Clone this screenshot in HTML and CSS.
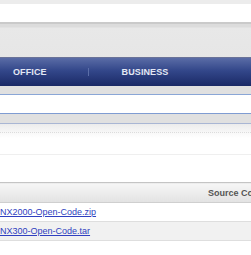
FILE: index.html
```html
<!DOCTYPE html>
<html lang="en">
<head>
  <meta charset="UTF-8">
  <title>Open Source</title>
  <link rel="stylesheet" href="styles.css">
</head>
<body>

  <div class="top-strip"></div>
  <div class="brand"></div>
  <div class="subnav"></div>

  <nav class="mainnav">
    <a href="#" class="office">OFFICE</a>
    <span class="sep"></span>
    <a href="#">BUSINESS</a>
  </nav>

  <div class="band"></div>
  <div class="search"></div>
  <div class="band band-low"></div>
  <div class="crumb"></div>
  <div class="rule"></div>

  <table class="downloads">
    <tr>
      <th class="file-col"></th>
      <th>Source Code</th>
    </tr>
    <tr>
      <td><a href="#">NX2000-Open-Code.zip</a></td>
      <td></td>
    </tr>
    <tr class="alt">
      <td><a href="#">NX300-Open-Code.tar</a></td>
      <td></td>
    </tr>
  </table>

</body>
</html>
```

FILE: styles.css
```css
body {
  margin: 0;
  width: 251px;
  overflow: hidden;
  background: #fff;
  font-family: 'Liberation Sans', Arial, sans-serif;
  font-size: 9px;
}

.top-strip {
  height: 4px;
  background: #ececec;
}

.brand {
  height: 18px;
  background: #fff;
}

.subnav {
  height: 33px;
  border-top: 2px solid #cacaca;
  border-bottom: 1px solid #6a7398;
  background: linear-gradient(#dcdcdc 0, #dcdcdc 3px, #e8e8e8 4px, #e6e6e6 100%);
}

.mainnav {
  height: 28px;
  display: flex;
  align-items: center;
  background: linear-gradient(#5a6ca6, #33478a 45%, #1a2966);
}

.mainnav a {
  color: #e4e8f4;
  text-decoration: none;
  font-weight: bold;
  font-size: 9px;
  letter-spacing: 0.1px;
}

.mainnav .office {
  margin-left: 13px;
}

.sep {
  width: 1px;
  height: 8px;
  background: #5b6ea8;
  margin: 0 33px 0 41px;
}

.band {
  height: 8px;
  background: #e0e0e0;
  border-bottom: 1px solid #8aa6d6;
}

.band-low {
  height: 9px;
  border-top: 1px solid #7f9cd2;
  border-bottom: 1px solid #a9b6d4;
}

.search {
  height: 18px;
  background: #fff;
}

.crumb {
  height: 30px;
  background: linear-gradient(#ececec, #fff 14px);
}

.crumb::after {
  content: "";
  display: block;
  height: 0;
  border-top: 1px dotted #dcdcdc;
  position: relative;
  top: 8px;
}

.rule {
  height: 27px;
  border-top: 1px solid #efefef;
}

.downloads {
  width: 420px;
  border-collapse: collapse;
}

.downloads th {
  height: 19px;
  padding: 0;
  text-align: left;
  color: #555;
  font-size: 9px;
  background: linear-gradient(#f6f6f6, #e2e2e2);
  border-top: 1px solid #c4c4c4;
  border-bottom: 1px solid #cfcfcf;
}

.downloads .file-col {
  width: 208px;
}

.downloads td {
  height: 18px;
  padding: 0;
}

.downloads tr.alt td {
  background: #f1f1f1;
  border-top: 1px solid #dedede;
  border-bottom: 1px solid #dedede;
}

.downloads a {
  color: #2f3fc0;
}
```
